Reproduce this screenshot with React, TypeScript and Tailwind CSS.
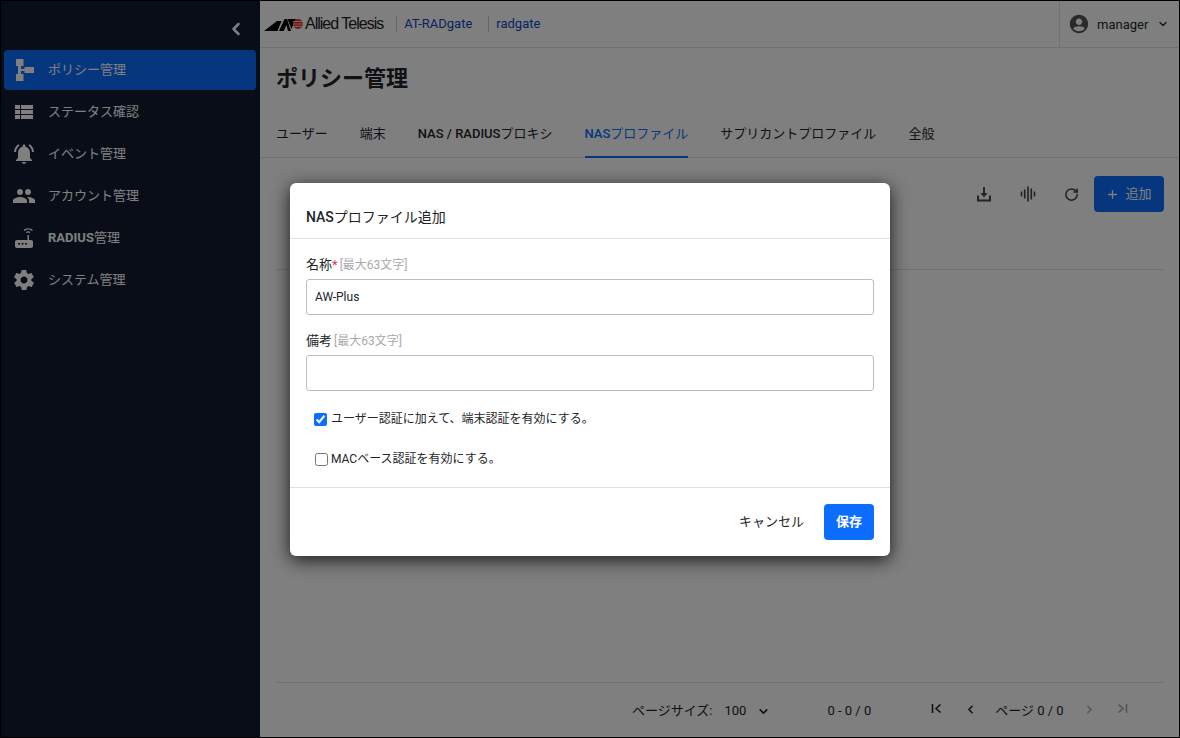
import { ChevronDown, ChevronLeft, ChevronRight, Plus, RotateCw } from 'lucide-react';
import type React from 'react';

const FONT = "font-['Roboto','Noto_Sans_CJK_JP',sans-serif]";

function IconFrame({ children, className = '' }: { children: React.ReactNode; className?: string }) {
  return (
    <svg viewBox="0 0 24 24" fill="currentColor" className={className}>
      {children}
    </svg>
  );
}

const navItems: { label: React.ReactNode; icon: React.ReactNode; active?: boolean }[] = [
  {
    label: 'ポリシー管理',
    active: true,
    icon: (
      <IconFrame className="w-[24px] h-[24px]">
        <path d="M4 1h7.500v7H9v3h3.500V9H22v6h-9.500v-2H9v3h2.500v7H4v-7h2V8H4z" />
      </IconFrame>
    ),
  },
  {
    label: 'ステータス確認',
    icon: (
      <IconFrame className="w-[24px] h-[24px]">
        <path d="M3 5h5v4H3zM9 5h12v4H9zM3 10h5v4H3zM9 10h12v4H9zM3 15h5v4H3zM9 15h12v4H9z" />
      </IconFrame>
    ),
  },
  {
    label: 'イベント管理',
    icon: (
      <IconFrame className="w-[24px] h-[24px]">
        <path d="M12 22c1.100 0 2-.9 2-2h-4c0 1.100.9 2 2 2zm6-6v-5c0-3.100-1.600-5.600-4.500-6.300V4c0-.8-.7-1.500-1.500-1.500S10.500 3.200 10.500 4v.7C7.600 5.400 6 7.900 6 11v5l-2 2v1h16v-1zM7.600 3.600 6.200 2.200C3.800 4 2.200 6.800 2 10h2c.2-2.600 1.500-4.900 3.600-6.400zM20 10h2c-.2-3.200-1.800-6-4.200-7.800l-1.400 1.400c2.100 1.500 3.400 3.800 3.600 6.400z" />
      </IconFrame>
    ),
  },
  {
    label: 'アカウント管理',
    icon: (
      <IconFrame className="w-[24px] h-[24px]">
        <path d="M16 11c1.700 0 3-1.300 3-3s-1.300-3-3-3-3 1.300-3 3 1.300 3 3 3zm-8 0c1.700 0 3-1.300 3-3S9.700 5 8 5 5 6.300 5 8s1.300 3 3 3zm0 2c-2.300 0-7 1.200-7 3.500V19h14v-2.500C15 14.200 10.300 13 8 13zm8 0c-.3 0-.6 0-1 .1 1.200.8 2 1.900 2 3.400V19h6v-2.500c0-2.300-4.700-3.500-7-3.500z" />
      </IconFrame>
    ),
  },
  {
    label: <span><span className="font-bold">RADIUS</span>管理</span>,
    icon: (
      <IconFrame className="w-[24px] h-[24px]">
        <path d="M19 14h-2V9h-1.500v5H5c-1.100 0-2 .9-2 2v4c0 1.100.9 2 2 2h14c1.100 0 2-.9 2-2v-4c0-1.100-.9-2-2-2zM8 18.500H6v-1.500h2zm3.500 0h-2v-1.500h2zm3.500 0h-2v-1.500h2zM16.200 6.500c.6 0 1.100.2 1.500.6l.8-.8c-.6-.6-1.400-1-2.300-1s-1.700.4-2.300 1l.8.8c.4-.4.900-.6 1.500-.6zM16.200 3.500c1.500 0 2.800.6 3.800 1.500l.8-.8C19.600 3 18 2.300 16.200 2.300s-3.400.7-4.600 1.900l.8.800c1-.9 2.300-1.500 3.800-1.500z" />
      </IconFrame>
    ),
  },
  {
    label: 'システム管理',
    icon: (
      <IconFrame className="w-[24px] h-[24px]">
        <path d="M19.400 13c0-.3.100-.6.100-1s0-.7-.1-1l2.100-1.600c.2-.2.200-.4.100-.6l-2-3.500c-.1-.2-.4-.3-.6-.2l-2.500 1c-.5-.4-1.100-.7-1.700-1l-.4-2.700c0-.2-.2-.4-.5-.4h-4c-.3 0-.5.200-.5.400l-.4 2.700c-.6.300-1.200.6-1.700 1l-2.500-1c-.2-.1-.5 0-.6.200l-2 3.500c-.1.200-.1.400.1.600L4.600 11c0 .3-.1.600-.1 1s0 .7.1 1l-2.100 1.600c-.2.200-.2.400-.1.600l2 3.500c.1.200.4.300.6.200l2.500-1c.5.400 1.100.7 1.700 1l.4 2.700c0 .2.2.4.5.4h4c.3 0 .5-.2.5-.4l.4-2.700c.6-.3 1.200-.6 1.700-1l2.500 1c.2.100.5 0 .6-.2l2-3.500c.1-.2.100-.4-.1-.6zM12 15.500c-1.900 0-3.500-1.600-3.500-3.500s1.600-3.500 3.500-3.500 3.500 1.600 3.500 3.500-1.600 3.500-3.500 3.500z" />
      </IconFrame>
    ),
  },
];

const tabs: { label: React.ReactNode; active?: boolean }[] = [
  { label: 'ユーザー' },
  { label: '端末' },
  { label: <span><span className="font-medium">NAS / RADIUS</span>プロキシ</span> },
  { label: <span><span className="font-medium">NAS</span>プロファイル</span>, active: true },
  { label: 'サプリカントプロファイル' },
  { label: '全般' },
];

function Logo() {
  return (
    <div className="flex items-center gap-[2px]">
      <svg viewBox="0 0 39 13" className="w-[39px] h-[13px]">
        <path d="M0 13 13 3h4.500l-4 10zM15 13l5.500-12H23l4 12h-3l-1.600-6-2.700 6zM23.500 1H32l-4.500 10z" fill="#000" />
        <circle cx="34" cy="6" r="5" fill="#e0352b" />
        <path d="M29 3.500h10M29 6h10M29 8.500h10" stroke="#fff" strokeWidth="0.700" />
      </svg>
      <span className="font-['Liberation_Sans',sans-serif] text-[16px] font-light tracking-[-1px] text-[#222] leading-none">
        Allied Telesis
      </span>
    </div>
  );
}

function Sidebar() {
  return (
    <aside className="w-[259px] shrink-0 bg-[#111a30] text-white flex flex-col">
      <div className="h-[49px] flex items-center justify-end pr-[14px] pt-[6px]">
        <ChevronLeft className="w-[20px] h-[20px]" strokeWidth={3} />
      </div>
      <nav className="flex flex-col gap-[2px] pl-[3px] pr-[4px]">
        {navItems.map((item, i) => (
          <div
            key={i}
            className={`h-[40px] flex items-center gap-[12px] pl-[8px] rounded-[4px] text-[13px] ${
              item.active ? 'bg-[#0d6efd]' : ''
            }`}
          >
            {item.icon}
            <span>{item.label}</span>
          </div>
        ))}
      </nav>
    </aside>
  );
}

function Header() {
  return (
    <header className="h-[47px] border-b border-[#dee2e6] flex items-center shrink-0">
      <div className="pl-[4px] flex items-center">
        <Logo />
        <div className="ml-[13px] h-[16px] border-l border-[#ccc]" />
        <span className="ml-[7px] text-[13px] text-[#0d47c0]">AT-RADgate</span>
        <div className="ml-[16px] h-[16px] border-l border-[#ccc]" />
        <span className="ml-[7px] text-[13px] text-[#0d47c0]">radgate</span>
      </div>
      <div className="ml-auto h-full border-l border-[#dee2e6] flex items-center pl-[8px] pr-[10px] w-[120px]">
        <svg viewBox="0 0 24 24" fill="#555" className="w-[22px] h-[22px]">
          <path d="M12 2C6.500 2 2 6.500 2 12s4.500 10 10 10 10-4.500 10-10S17.500 2 12 2zm0 4c1.900 0 3.500 1.600 3.500 3.500S13.900 13 12 13s-3.500-1.600-3.500-3.500S10.100 6 12 6zm0 14c-2.500 0-4.800-1.200-6.300-3 .9-1.600 3.600-2.500 6.300-2.500s5.400.9 6.300 2.500c-1.500 1.800-3.800 3-6.300 3z" />
        </svg>
        <span className="ml-[7px] pt-[1px] text-[13px] text-[#212529]">manager</span>
        <ChevronDown className="ml-auto w-[12px] h-[12px] text-[#212529]" strokeWidth={2.5} />
      </div>
    </header>
  );
}

function Tabs() {
  return (
    <div className="h-[50px] flex gap-[32px] px-[16px] border-b border-[#dee2e6] shrink-0">
      {tabs.map((t, i) => (
        <div
          key={i}
          className={`h-[50px] flex items-center text-[13px] border-b-2 pt-[4px] ${
            t.active ? 'border-[#0d6efd] text-[#0d6efd]' : 'border-transparent text-[#212529]'
          }`}
        >
          {t.label}
        </div>
      ))}
    </div>
  );
}

function Toolbar() {
  return (
    <div className="h-[112px] ml-[16px] mr-[15px] border-b border-[#dee2e6] shrink-0 flex justify-end items-start pt-[18px]">
      <div className="flex items-center gap-[26px] text-[#444] h-[36px]">
        <svg viewBox="0 0 18 18" className="w-[18px] h-[18px]" fill="none" stroke="currentColor" strokeWidth="2">
          <path d="M3 10.500V15.500h12v-5" />
          <path d="M9 2v7" strokeWidth="1.800" />
          <path d="M5.500 8 9 12.500 12.500 8z" fill="currentColor" stroke="none" />
        </svg>
        <svg viewBox="0 0 18 18" className="w-[18px] h-[18px] mr-[1px]" fill="none" stroke="currentColor" strokeWidth="1.600">
          <path d="M2.500 6.500v5M5.700 4.500v9M9 1.500v15M12.300 3.500v11M15.500 6.500v5" />
        </svg>
        <RotateCw className="w-[15px] h-[15px]" strokeWidth={2.4} />
      </div>
      <button className="ml-[15px] w-[70px] h-[36px] bg-[#0d6efd] rounded-[4px] text-white text-[13px] flex items-center justify-center gap-[6px]">
        <Plus className="w-[13px] h-[13px]" strokeWidth={2.5} />
        追加
      </button>
    </div>
  );
}

function Pagination() {
  return (
    <div className="mt-auto ml-[16px] mr-[15px] h-[55px] border-t border-[#dee2e6] shrink-0 flex items-center text-[13px] text-[#212529] pt-[2px]">
      <div className="ml-[356px] flex items-center">
        <span>ページサイズ:</span>
        <span className="ml-[12px]">100</span>
        <ChevronDown className="ml-[11px] w-[13px] h-[13px]" strokeWidth={3} />
      </div>
      <span className="ml-[57px]">0 - 0 / 0</span>
      <PageButtons />
    </div>
  );
}

function PageButtons() {
  return (
    <div className="ml-[59px] flex items-center text-[#212529]">
      <svg viewBox="0 0 14 14" className="w-[14px] h-[14px] mb-[4px]" fill="none" stroke="currentColor" strokeWidth="1.600">
        <path d="M2.500 2v9M10.500 2.500 6 6.500l4.500 4" />
      </svg>
      <ChevronLeft className="ml-[20px] w-[13px] h-[13px] mb-[4px]" strokeWidth={3} />
      <span className="ml-[18px]">ページ 0 / 0</span>
      <ChevronRight className="ml-[19px] w-[13px] h-[13px] mb-[4px] text-[#aaa]" strokeWidth={2.5} />
      <svg viewBox="0 0 14 14" className="ml-[19px] w-[14px] h-[14px] mb-[4px] text-[#aaa]" fill="none" stroke="currentColor" strokeWidth="1.600">
        <path d="M11.500 2v9M3.500 2.500 8 6.500l-4.500 4" />
      </svg>
    </div>
  );
}

function FormLabel({ text, required }: { text: string; required?: boolean }) {
  return (
    <div className="text-[13px] leading-[18px] text-[#212529]">
      {text}
      {required && <span className="text-[#dc3545]">*</span>}
      <span className="ml-[2px] text-[12px] text-[#aaaaaa]">[最大63文字]</span>
    </div>
  );
}

function Dialog() {
  return (
    <div className="absolute left-[289px] top-[182px] w-[600px] h-[373px] bg-white rounded-[6px] shadow-[0_4px_18px_rgba(0,0,0,0.8)] flex flex-col text-[#212529]">
      <div className="h-[56px] flex items-center px-[16px] border-b border-[#dee2e6] text-[14px] pt-[14px] shrink-0">
        <span className="font-medium">NAS</span>プロファイル追加
      </div>
      <div className="px-[16px] pt-[17px] flex-1">
        <FormLabel text="名称" required />
        <input
          readOnly
          value="AW-Plus"
          className="mt-[5px] block w-full h-[36px] border border-[#bdbdbd] rounded-[3px] px-[8px] text-[12px] outline-none"
        />
        <div className="mt-[17px]">
          <FormLabel text="備考" />
        </div>
        <input readOnly className="mt-[5px] block w-full h-[36px] border border-[#bdbdbd] rounded-[3px] px-[8px] text-[12px] outline-none" />
        <label className="mt-[19px] ml-[8px] flex items-center gap-[4px] text-[12px] h-[18px]">
          <input type="checkbox" readOnly checked className="w-[13px] h-[13px] accent-[#0d6efd]" />
          <span>ユーザー認証に加えて、端末認証を有効にする。</span>
        </label>
        <label className="mt-[22px] ml-[9px] flex items-center gap-[3px] text-[12px] h-[18px]">
          <input type="checkbox" readOnly className="w-[13px] h-[13px]" />
          <span>MACベース認証を有効にする。</span>
        </label>
      </div>
      <div className="h-[69px] border-t border-[#dee2e6] flex items-center justify-end px-[16px] shrink-0">
        <span className="text-[13px] mr-[20px]">キャンセル</span>
        <button className="w-[50px] h-[36px] bg-[#0d6efd] text-white rounded-[4px] text-[13px] font-bold">保存</button>
      </div>
    </div>
  );
}

export default function App() {
  return (
    <div className={`${FONT} relative w-[1180px] h-[738px] overflow-hidden bg-white flex border border-black`}>
      <Sidebar />
      <main className="flex-1 flex flex-col min-w-0">
        <Header />
        <h1 className="h-[60px] shrink-0 flex items-center px-[16px] text-[22px] font-bold text-[#212529]">ポリシー管理</h1>
        <Tabs />
        <Toolbar />
        <Pagination />
      </main>
      <div className="absolute inset-0 bg-black/50" />
      <Dialog />
    </div>
  );
}
